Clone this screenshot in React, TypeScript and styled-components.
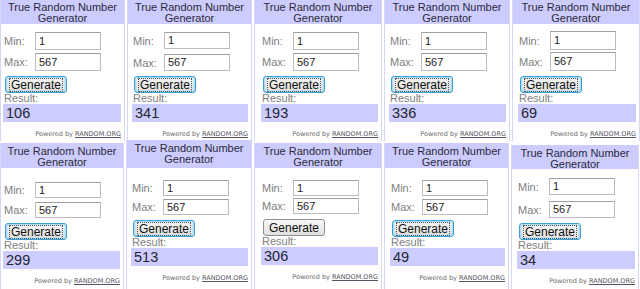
import styled, { createGlobalStyle } from 'styled-components';

const GlobalStyle = createGlobalStyle`
  html, body {
    margin: 0;
    padding: 0;
    background: #ffffff;
    overflow: hidden;
  }
  body {
    font-family: "Liberation Sans", Arial, sans-serif;
  }
`;

type Widget = {
  w: number;
  top: number;
  headH: number;
  headPad: number;
  padTop: number;
  inset: number;
  inputH: number;
  rowGap: number;
  result: string;
  focused: boolean;
};

const topRow: Widget[] = [
  { w: 125, top: 0, headH: 24, headPad: 2, padTop: 8, inset: 3, inputH: 18, rowGap: 3, result: '106', focused: true },
  { w: 125, top: 0, headH: 24, headPad: 2, padTop: 8, inset: 5, inputH: 17, rowGap: 5, result: '341', focused: true },
  { w: 128, top: 0, headH: 24, headPad: 2, padTop: 8, inset: 7, inputH: 18, rowGap: 3, result: '193', focused: true },
  { w: 126, top: 0, headH: 24, headPad: 2, padTop: 8, inset: 5, inputH: 18, rowGap: 3, result: '336', focused: true },
  { w: 128, top: 0, headH: 24, headPad: 2, padTop: 7, inset: 6, inputH: 19, rowGap: 2, result: '69', focused: true },
];

const bottomRow: Widget[] = [
  { w: 124, top: 3, headH: 25, headPad: 3, padTop: 14, inset: 3, inputH: 16, rowGap: 4, result: '299', focused: true },
  { w: 126, top: 0, headH: 28, headPad: 3, padTop: 12, inset: 5, inputH: 16, rowGap: 3, result: '513', focused: true },
  { w: 128, top: 3, headH: 25, headPad: 3, padTop: 12, inset: 7, inputH: 16, rowGap: 2, result: '306', focused: false },
  { w: 125, top: 3, headH: 25, headPad: 3, padTop: 12, inset: 6, inputH: 16, rowGap: 3, result: '49', focused: true },
  { w: 128, top: 5, headH: 24, headPad: 3, padTop: 9, inset: 6, inputH: 17, rowGap: 6, result: '34', focused: true },
];

export default function App() {
  return (
    <>
      <GlobalStyle />
      <Page>
        <Row $h={141}>
          {topRow.map((w, i) => (
            <RngWidget key={i} {...w} />
          ))}
        </Row>
        <Row $h={149} $mt={-1}>
          {bottomRow.map((w, i) => (
            <RngWidget key={i} {...w} />
          ))}
        </Row>
      </Page>
    </>
  );
}

function RngWidget(p: Widget) {
  return (
    <Box $w={p.w} $top={p.top}>
      <Header $h={p.headH} $pad={p.headPad}>
        True Random Number
        <br />
        Generator
      </Header>
      <Body $padTop={p.padTop} $inset={p.inset}>
        <Field $h={p.inputH}>
          <Label>Min:</Label>
          <Input $h={p.inputH}>1</Input>
        </Field>
        <Field $h={p.inputH} $mt={p.rowGap}>
          <Label>Max:</Label>
          <Input $h={p.inputH}>567</Input>
        </Field>
        <Button $focused={p.focused}>
          <span>Generate</span>
        </Button>
        <ResultLabel>Result:</ResultLabel>
        <ResultBand>{p.result}</ResultBand>
        <Powered>
          Powered by <u>RANDOM.ORG</u>
        </Powered>
      </Body>
    </Box>
  );
}

const Page = styled.div`
  width: 640px;
  height: 289px;
  overflow: hidden;
  display: flex;
  flex-direction: column;
`;

const Row = styled.div<{ $h: number; $mt?: number }>`
  display: flex;
  gap: 2px;
  height: ${(p) => p.$h}px;
  margin-top: ${(p) => p.$mt ?? 0}px;
  overflow: hidden;
  flex-shrink: 0;
`;

const Box = styled.div<{ $w: number; $top: number }>`
  width: ${(p) => p.$w}px;
  flex-shrink: 0;
  box-sizing: border-box;
  margin-top: ${(p) => p.$top}px;
  border-left: 1px solid #d6d6f6;
  border-right: 1px solid #d6d6f6;
  background: #ffffff;
`;

const Header = styled.div<{ $h: number; $pad: number }>`
  height: ${(p) => p.$h}px;
  box-sizing: border-box;
  padding-top: ${(p) => p.$pad}px;
  background: #ccccff;
  color: #2a2a3a;
  font-size: 11px;
  line-height: 11px;
  text-align: center;
`;

const Body = styled.div<{ $padTop: number; $inset: number }>`
  padding: ${(p) => p.$padTop}px 3px 0 ${(p) => p.$inset}px;
  display: flex;
  flex-direction: column;
  align-items: flex-start;
`;

const Field = styled.div<{ $h: number; $mt?: number }>`
  display: flex;
  align-items: center;
  height: ${(p) => p.$h}px;
  margin-top: ${(p) => p.$mt ?? 0}px;
`;

const Label = styled.span`
  width: 31px;
  font-size: 11px;
  color: #808080;
`;

const Input = styled.div<{ $h: number }>`
  width: 66px;
  height: ${(p) => p.$h}px;
  box-sizing: border-box;
  border: 1px solid #bcbcbc;
  border-top-color: #a0a0a0;
  padding-left: 3px;
  font-size: 11px;
  line-height: ${(p) => p.$h - 2}px;
  color: #222222;
  background: #ffffff;
`;

const Button = styled.div<{ $focused: boolean }>`
  margin-top: 5px;
  margin-left: 1px;
  width: 62px;
  height: 17px;
  box-sizing: border-box;
  display: flex;
  align-items: center;
  justify-content: center;
  border-radius: 3px;
  font-size: 12px;
  color: #111111;
  background: linear-gradient(#f8f8f8, #e0e0e0);
  border: 1px solid ${(p) => (p.$focused ? '#3b9fd8' : '#8f8f8f')};
  box-shadow: ${(p) => (p.$focused ? '0 0 2px 1px #9ad6f4 inset' : 'none')};

  span {
    padding: 0 1px;
    line-height: 12px;
    outline: ${(p) => (p.$focused ? '1px dotted #555' : 'none')};
  }
`;

const ResultLabel = styled.div`
  height: 11px;
  font-size: 11px;
  line-height: 11px;
  color: #808080;
`;

const ResultBand = styled.div`
  align-self: stretch;
  margin-left: -1px;
  height: 18px;
  box-sizing: border-box;
  padding-left: 3px;
  background: #ccccff;
  font-size: 14.5px;
  line-height: 19px;
  color: #262630;
`;

const Powered = styled.div`
  align-self: stretch;
  margin-top: 8px;
  text-align: right;
  font-family: "DejaVu Sans", Verdana, sans-serif;
  font-size: 6.5px;
  line-height: 9px;
  color: #6a6a6a;

  u {
    color: #555566;
  }
`;
